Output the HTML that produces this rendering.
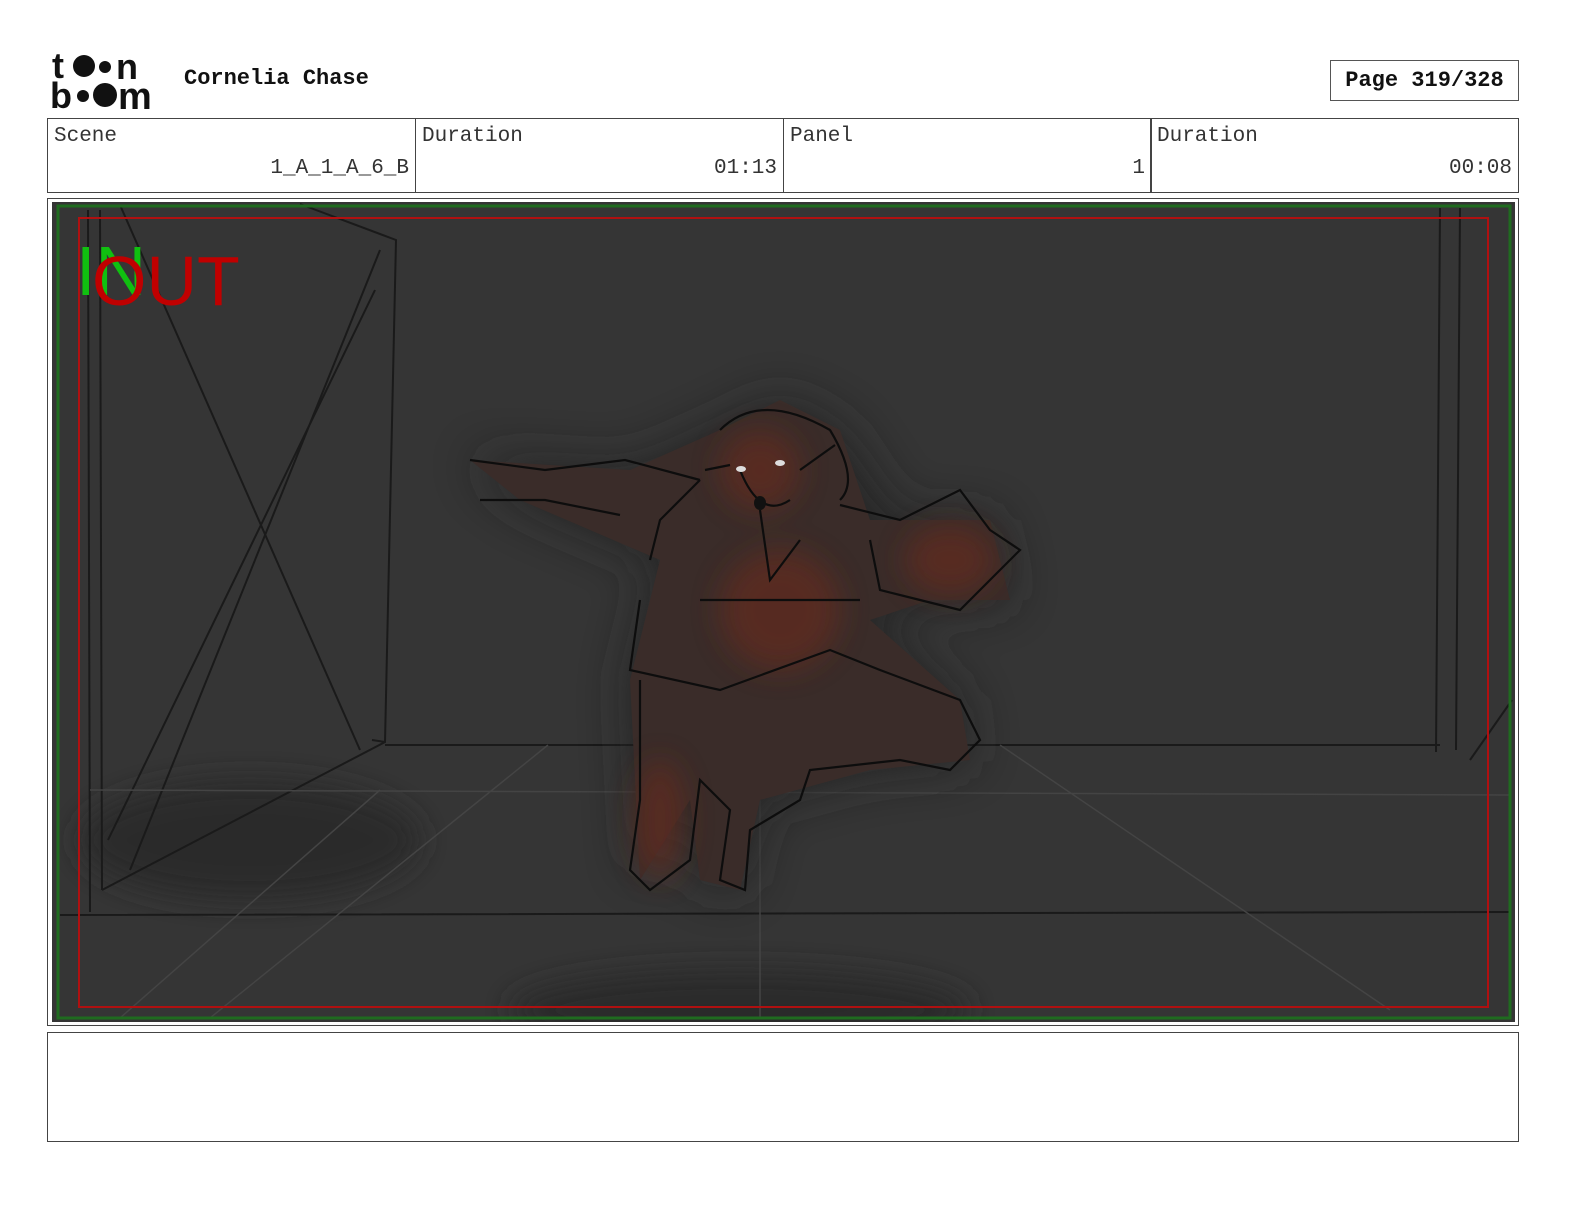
<!DOCTYPE html>
<html style="overflow:hidden"><head><meta charset="utf-8"><style>
html,body{margin:0;padding:0;overflow:hidden;}
body{background:#fff;width:1584px;height:1224px;position:relative;font-family:"Liberation Mono",monospace;}
.abs{position:absolute}
.cell{position:absolute;top:118px;height:75px;border:1px solid #444;box-sizing:border-box;font-size:21px;color:#333}
.cell .l{position:absolute;left:6px;top:6px}
.cell .v{position:absolute;right:6px;top:38px}
</style></head><body>
<svg class="abs" style="left:50px;top:50px" width="115" height="62" viewBox="0 0 115 62">
<g fill="#111">
<text x="2" y="28" font-family="Liberation Sans,sans-serif" font-weight="bold" font-size="36">t</text>
<circle cx="34" cy="16" r="11"/><circle cx="55" cy="17" r="6"/>
<text x="66" y="29" font-family="Liberation Sans,sans-serif" font-weight="bold" font-size="36">n</text>
<text x="0" y="58" font-family="Liberation Sans,sans-serif" font-weight="bold" font-size="36">b</text>
<circle cx="33" cy="46" r="6"/><circle cx="55" cy="45" r="12"/>
<text x="68" y="59" font-family="Liberation Sans,sans-serif" font-weight="bold" font-size="38">m</text>
</g></svg>
<div class="abs" style="left:184px;top:66px;font-size:22px;font-weight:bold;color:#111">Cornelia Chase</div>
<div class="abs" style="left:1330px;top:60px;width:189px;height:41px;border:1px solid #555;box-sizing:border-box;font-size:22px;font-weight:bold;text-align:center;line-height:39px;color:#111">Page 319/328</div>
<div class="cell" style="left:47px;width:369px"><span class="l">Scene</span><span class="v">1_A_1_A_6_B</span></div>
<div class="cell" style="left:415px;width:369px"><span class="l">Duration</span><span class="v">01:13</span></div>
<div class="cell" style="left:783px;width:369px"><span class="l">Panel</span><span class="v">1</span></div>
<div class="cell" style="left:1150px;width:369px"><span class="l">Duration</span><span class="v">00:08</span></div>
<div class="abs" style="left:47px;top:198px;width:1472px;height:828px;border:1px solid #444;box-sizing:border-box"></div>
<svg class="abs" style="left:52px;top:202px" width="1463" height="820" viewBox="52 202 1463 820">
<defs><filter id="b" x="-50%" y="-50%" width="200%" height="200%"><feGaussianBlur stdDeviation="14"/></filter>
<filter id="c" x="-50%" y="-50%" width="200%" height="200%"><feGaussianBlur stdDeviation="25"/></filter></defs>
<rect x="52" y="202" width="1463" height="820" fill="#353535"/>
<g fill="#2a2a2a" filter="url(#b)"><ellipse cx="740" cy="1010" rx="230" ry="40"/><ellipse cx="250" cy="840" rx="170" ry="60"/></g>
<g stroke="#1a1a1a" stroke-width="2" fill="none">
<path d="M88 210 L90 912 M100 210 L102 890 M102 890 L385 742 L396 240 L300 204 M385 742 L372 740 M120 205 L360 750 M130 870 L380 250 M108 840 L375 290"/>
<path d="M60 915 L1510 912 M385 745 L1440 745 M1440 208 L1436 752 M1460 208 L1456 750 M1470 760 L1512 700"/>
</g>
<g stroke="#444" stroke-width="1.5" fill="none"><path d="M90 790 L1510 795 M548 745 L210 1018 M1000 745 L1390 1010 M760 800 L760 1018 M380 790 L120 1018"/></g>
<g fill="#262626" filter="url(#c)" opacity="0.9">
<path d="M470 460 L630 470 L720 430 L780 400 L840 430 L900 520 L990 520 L1010 600 L930 600 L870 620 L960 700 L970 760 L870 770 L760 800 L740 890 L700 880 L690 800 L640 880 L630 680 L660 560 L520 500 Z"/>
</g>
<g fill="#3a2c29">
<path d="M470 460 L630 470 L720 430 L780 400 L840 430 L870 520 L990 520 L1010 600 L930 600 L870 620 L960 700 L970 760 L870 770 L760 800 L740 890 L700 880 L690 800 L640 880 L630 680 L660 560 L520 500 Z"/>
</g>
<g fill="#6a2a1e" filter="url(#b)" opacity="0.6">
<ellipse cx="780" cy="610" rx="60" ry="60"/><ellipse cx="950" cy="560" rx="45" ry="35"/><ellipse cx="660" cy="820" rx="25" ry="60"/><ellipse cx="760" cy="470" rx="40" ry="40"/>
</g>
<g stroke="#0d0d0d" stroke-width="2.2" fill="none">
<path d="M470 460 L545 470 L625 460 L700 480 M480 500 L545 500 L620 515 M720 430 Q760 390 830 430 Q860 480 840 500 M740 470 Q760 520 790 500 M650 560 L660 520 L700 480 M840 505 L900 520 L960 490 L990 530 L1020 550 L990 580 L960 610 L920 600 L880 590 L870 540"/>
<path d="M640 600 L630 670 L720 690 L830 650 L880 670 L960 700 L980 740 L950 770 L900 760 L810 770 L800 800 L750 830 L745 890 L720 880 L730 810 L700 780 L690 860 L650 890 L630 870 L640 800 L640 680"/>
<path d="M760 510 L770 580 L800 540 M700 600 L860 600 M705 470 L730 465 M800 470 L835 445"/>
</g>
<g fill="#ddd"><ellipse cx="741" cy="469" rx="5" ry="3"/><ellipse cx="780" cy="463" rx="5" ry="3"/></g>
<ellipse cx="760" cy="503" rx="6" ry="7" fill="#111"/>
<rect x="58" y="206" width="1452" height="812" fill="none" stroke="#1f6b1f" stroke-width="3"/>
<rect x="79" y="218" width="1409" height="789" fill="none" stroke="#b01010" stroke-width="2"/>
<text x="76" y="295" font-family="Liberation Sans,sans-serif" font-size="70" fill="#10c010">IN</text>
<text x="92" y="305" font-family="Liberation Sans,sans-serif" font-size="70" fill="#c00000">OUT</text>
</svg>
<div class="abs" style="left:47px;top:1032px;width:1472px;height:110px;border:1px solid #444;box-sizing:border-box"></div>
</body></html>
